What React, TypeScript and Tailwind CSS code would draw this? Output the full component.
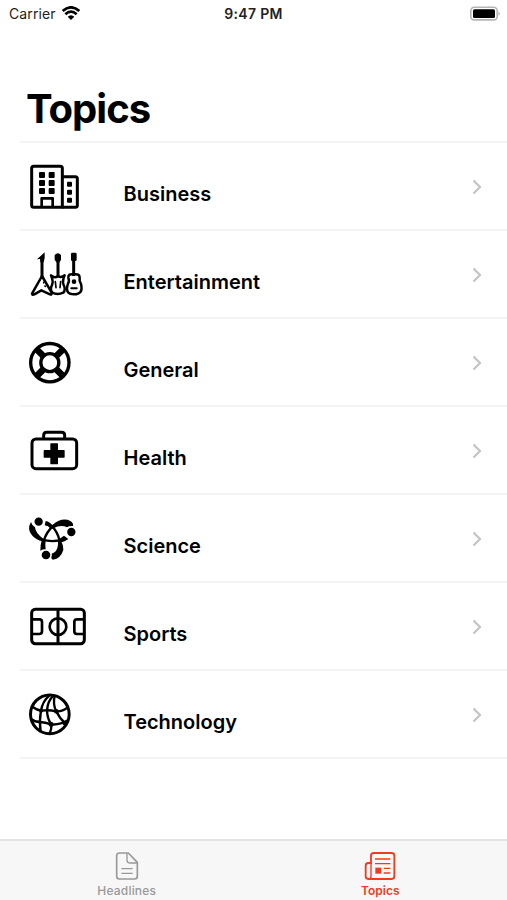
import type { ReactNode } from "react";

function BusinessIcon() {
  return (
    <>
      <g fill="none" stroke="#000" strokeWidth={9} strokeLinejoin="round">
        <path d="M41 37H121Q127 37 127 43V160H41Q35 160 35 154V43Q35 37 41 37Z" />
        <path d="M127 68H166Q172 68 172 74V154Q172 160 166 160H127" />
        <path d="M65 160V133H98V160" strokeWidth={8} />
      </g>
      {[54, 78, 102].map((y) => (
        <g key={y}>
          <rect x={57} y={y} width={18} height={18} rx={3} />
          <rect x={86} y={y} width={18} height={18} rx={3} />
          <rect x={141} y={y + 29} width={15} height={15} rx={3} />
        </g>
      ))}
    </>
  );
}

function EntertainmentIcon() {
  return (
    <>
      <path d="M51 52L74 31V48L71 61H61L60 51Z" />
      <path d="M104 39Q114 29 123 39V54L117 62H111L104 54Z" />
      <rect x={153} y={32} width={17} height={25} rx={4} />
      <g fill="none" stroke="#000" strokeWidth={7.5} strokeLinejoin="round" strokeLinecap="round">
        <path d="M66 56V110M114 56V104M161 52V102" strokeWidth={9} strokeLinecap="butt" />
        <path d="M66 102L36 155Q37 161 43 157L64 145L90 157Q96 159 95 152Z" />
        <path d="M93 100Q101 119 96 129Q89 143 97 152Q112 160 130 152Q138 143 131 129Q126 117 134 100Q123 109 114 102Q104 110 93 100Z" />
        <path d="M161 97Q144 94 145 107Q149 117 144 125Q133 157 162 157Q191 157 183 126Q177 117 179 107Q179 94 161 97Z" />
        <path d="M71 121V122M75 132L76 133M106 119L108 137M122 119L120 137" strokeWidth={5} />
        <circle cx={162} cy={119} r={4} fill="#000" strokeWidth={6} />
        <path d="M154 139H170" strokeWidth={6} />
      </g>
    </>
  );
}

function GeneralIcon() {
  return (
    <g fill="none" stroke="#000">
      <circle cx={89.5} cy={98} r={57.5} strokeWidth={10} />
      <circle cx={89.5} cy={98} r={27} strokeWidth={10} />
      <path d="M49 57L70 78M109 118L130 139M130 57L109 78M70 118L49 139" strokeWidth={20} />
    </g>
  );
}

function HealthIcon() {
  return (
    <>
      <g fill="none" stroke="#000" strokeWidth={9}>
        <rect x={36} y={63} width={134} height={89} rx={12} />
        <path d="M71 62V52Q71 43 80 43H125Q134 43 134 52V62" />
      </g>
      <path d="M93 78H112V98H132V117H112V137H93V117H73V98H93Z" stroke="#000" strokeWidth={4} strokeLinejoin="round" />
    </>
  );
}

function ScienceIcon() {
  return (
    <>
      <circle cx={56} cy={47} r={12.5} />
      <circle cx={154} cy={78} r={12.5} />
      <circle cx={78} cy={147} r={13} />
      <path d="M33 48Q36 59 45 64Q47 83 70 98L68 106Q47 102 36 88Q20 70 33 48Z" />
      <path d="M97 57Q127 32 151 45Q161 51 159 60Q147 59 141 64Q123 54 100 67Z" />
      <path d="M114 98Q131 108 130 132Q122 158 99 161Q93 160 94 153Q97 148 95 143Q112 138 114 116Z" />
      <path d="M77 45Q90 47 100 61L92 68Q85 59 74 58Z" />
      <path d="M132 89L145 99Q135 107 121 110L117 100Z" />
      <path d="M65 102L77 103Q75 117 77 130Q67 130 61 134Q61 117 65 102Z" />
      <path d="M100 60Q80 76 71 105M94 59Q114 78 119 106M66 101Q95 109 124 102" fill="none" stroke="#000" strokeWidth={7} />
    </>
  );
}

function SportsIcon() {
  return (
    <g fill="none" stroke="#000" strokeWidth={9}>
      <rect x={35} y={46} width={158} height={103} rx={11} />
      <path d="M114 46V149" />
      <circle cx={114} cy={98} r={25} strokeWidth={8} />
      <path d="M35 76H58Q66 76 66 84V112Q66 120 58 120H35M193 76H171Q163 76 163 84V112Q163 120 171 120H193" strokeWidth={8} />
    </g>
  );
}

function TechnologyIcon() {
  return (
    <>
      <g fill="none" stroke="#000" strokeWidth={7}>
        <circle cx={89.5} cy={97} r={58} strokeWidth={9} />
        <path d="M88 41Q68 57 63 86Q57 118 62 150" />
        <path d="M100 41Q83 57 81 86Q82 110 93 126Q96 142 88 154" />
        <path d="M104 41Q98 68 109 88Q119 110 136 124" />
        <path d="M38 75Q50 84 64 86Q86 83 109 88Q128 89 142 77" />
        <path d="M33 111Q45 120 60 120Q76 121 93 127Q118 130 145 114" />
      </g>
      <circle cx={63} cy={86} r={6} />
      <circle cx={109} cy={88} r={7} />
      <circle cx={60} cy={120} r={5} />
      <circle cx={93} cy={127} r={7.5} />
      <circle cx={134} cy={123} r={7} />
    </>
  );
}

const topics: { name: string; icon: ReactNode }[] = [
  { name: "Business", icon: <BusinessIcon /> },
  { name: "Entertainment", icon: <EntertainmentIcon /> },
  { name: "General", icon: <GeneralIcon /> },
  { name: "Health", icon: <HealthIcon /> },
  { name: "Science", icon: <ScienceIcon /> },
  { name: "Sports", icon: <SportsIcon /> },
  { name: "Technology", icon: <TechnologyIcon /> },
];

function StatusBar() {
  return (
    <div className="grid h-[27px] grid-cols-3 items-center text-[14px] text-[#222]">
      <div className="flex items-center gap-1.5 pl-[9px]">
        <span className="tracking-[0.1px]">Carrier</span>
        <svg width="18" height="14" viewBox="0 0 54 42" className="-mt-0.5">
          <g fill="none" stroke="#000" strokeWidth={8}>
            <path d="M2 15Q27 -7 52 15" />
            <path d="M10 25Q27 9 44 25" />
          </g>
          <path d="M17 32Q27 23 37 32L27 42Z" />
        </svg>
      </div>
      <span className="text-center font-semibold tracking-[0.3px]">9:47 PM</span>
      <div className="flex justify-end pr-1.5">
        <svg width="32" height="16" viewBox="0 0 32 16">
          <rect x="1.8" y="1.3" width="26.4" height="12.6" rx="3.5" fill="#fff" stroke="#b5b5b5" strokeWidth="1.6" />
          <rect x="4" y="3.2" width="22" height="8.9" rx="1.5" />
          <path d="M29.5 5.5Q32 7.5 29.5 10Z" fill="#aaa" />
        </svg>
      </div>
    </div>
  );
}

function TopicRow({ name, icon }: { name: string; icon: ReactNode }) {
  return (
    <li className="flex h-[88px] items-start border-b-2 border-[#f3f3f3]">
      <svg width="80" height="65" viewBox="0 0 240 195" className="mt-[11px] shrink-0">
        {icon}
      </svg>
      <span className="mt-[37px] ml-[23.5px] flex-1 text-[20px] leading-[29px] font-semibold">{name}</span>
      <svg width="12" height="18" viewBox="0 0 12 18" className="mt-[35px] mr-[24px]">
        <path d="M2.5 2.5L9 9L2.5 15.5" fill="none" stroke="#c4c4c6" strokeWidth="2.2" />
      </svg>
    </li>
  );
}

function TabBar() {
  return (
    <nav className="grid h-[61px] grid-cols-2 border-t-2 border-[#e3e3e3] bg-[#f7f7f7] text-[12px] leading-4 font-medium">
      <div className="flex flex-col items-center pt-2.5 text-[#999]">
        <svg width="26" height="32" viewBox="0 0 78 96" fill="none" stroke="currentColor" strokeWidth={5}>
          <path d="M16 6H43L70 34V76Q70 84 62 84H16Q8 84 8 76V14Q8 6 16 6Z" />
          <path d="M39 6V28Q39 36 47 36H70M22 53H56M22 67H56" strokeWidth={4} />
        </svg>
        <span className="tracking-[0.2px]">Headlines</span>
      </div>
      <div className="flex flex-col items-center pt-2.5 text-[#f13a20]">
        <svg width="34" height="32" viewBox="0 0 102 96" fill="none" stroke="currentColor" strokeWidth={5.5}>
          <path d="M32 6H86Q94 6 94 14V76Q94 84 86 84H16Q8 84 8 76V44Q8 36 16 36H24V14Q24 6 32 6Z" />
          <path d="M24 36V76Q24 84 16 84M36 24H82M36 38H82M62 52H82M62 66H82" strokeWidth={4} />
          <rect x="37" y="50" width="18" height="18" fill="currentColor" stroke="none" />
        </svg>
        <span className="font-semibold">Topics</span>
      </div>
    </nav>
  );
}

export default function App() {
  return (
    <main className="flex h-[900px] w-[507px] flex-col overflow-hidden bg-white font-[Inter,sans-serif] text-black">
      <StatusBar />
      <header className="ml-5 flex h-[116px] items-end border-b-2 border-[#f3f3f3] pb-[7px] pl-[6px]">
        <h1 className="text-[40px] leading-[50px] font-bold tracking-[-1px]">Topics</h1>
      </header>
      <ul className="ml-5 flex-1">
        {topics.map((topic) => (
          <TopicRow key={topic.name} name={topic.name} icon={topic.icon} />
        ))}
      </ul>
      <TabBar />
    </main>
  );
}
